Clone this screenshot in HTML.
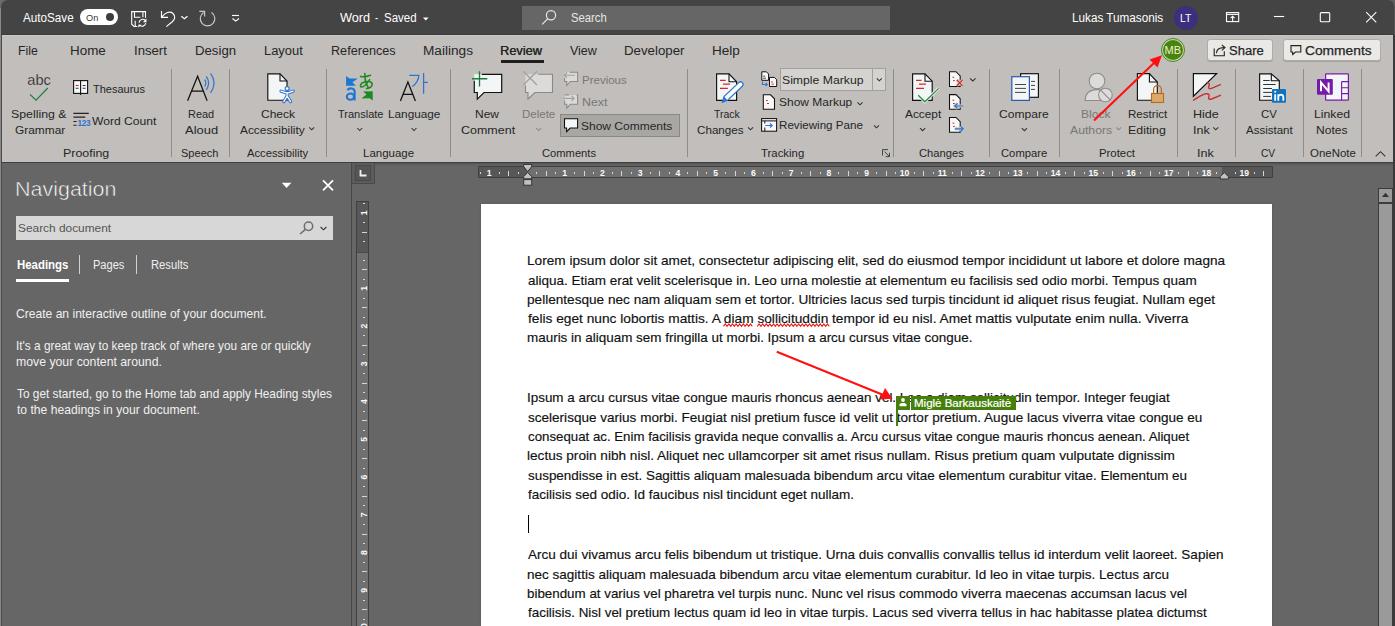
<!DOCTYPE html>
<html><head><meta charset="utf-8"><style>
html,body{margin:0;padding:0;width:1395px;height:626px;overflow:hidden;background:#666666}
body{position:relative;font-family:"Liberation Sans",sans-serif}
.b{position:absolute}
.t{position:absolute;white-space:nowrap;font-family:"Liberation Sans",sans-serif;transform-origin:0 0}
svg.ic{position:absolute;left:0;top:0;width:1395px;height:626px}
</style></head><body>

<!-- title bar -->
<div class="b" style="left:0;top:0;width:1395px;height:35px;background:#444444"></div>
<div class="b" style="left:0;top:34px;width:1395px;height:1px;background:#3b3b3b"></div>
<!-- search box -->
<div class="b" style="left:522px;top:6px;width:368px;height:24px;background:#666666"></div>
<!-- toggle -->
<div class="b" style="left:80px;top:9px;width:38px;height:16px;border-radius:8px;background:#ffffff"></div>
<div class="b" style="left:106px;top:13px;width:8px;height:8px;border-radius:4px;background:#3d3d3d"></div>
<!-- LT circle -->
<div class="b" style="left:1174px;top:6px;width:24px;height:24px;border-radius:12px;background:#3b2f7e"></div>
<!-- ribbon -->
<div class="b" style="left:0;top:35px;width:1393px;height:127px;background:#c1bebb"></div>
<div class="b" style="left:0;top:35px;width:1393px;height:1px;background:#c9c6c3"></div>
<!-- review underline -->
<div class="b" style="left:501px;top:60px;width:43px;height:3px;background:#1f1f1f"></div>
<!-- separators -->
<div class="b" style="left:171px;top:69px;width:1px;height:88px;background:#8f8d8a"></div>
<div class="b" style="left:229px;top:69px;width:1px;height:88px;background:#8f8d8a"></div>
<div class="b" style="left:326px;top:69px;width:1px;height:88px;background:#8f8d8a"></div>
<div class="b" style="left:450px;top:69px;width:1px;height:88px;background:#8f8d8a"></div>
<div class="b" style="left:687px;top:69px;width:1px;height:88px;background:#8f8d8a"></div>
<div class="b" style="left:893px;top:69px;width:1px;height:88px;background:#8f8d8a"></div>
<div class="b" style="left:989px;top:69px;width:1px;height:88px;background:#8f8d8a"></div>
<div class="b" style="left:1059px;top:69px;width:1px;height:88px;background:#8f8d8a"></div>
<div class="b" style="left:1177px;top:69px;width:1px;height:88px;background:#8f8d8a"></div>
<div class="b" style="left:1235px;top:69px;width:1px;height:88px;background:#8f8d8a"></div>
<div class="b" style="left:1303px;top:69px;width:1px;height:88px;background:#8f8d8a"></div>
<div class="b" style="left:1361px;top:69px;width:1px;height:88px;background:#8f8d8a"></div>
<!-- show comments toggled -->
<div class="b" style="left:560px;top:114px;width:118px;height:21px;background:#a9a7a4;border:1px solid #8a8886"></div>
<!-- simple markup dropdown -->
<div class="b" style="left:780px;top:68px;width:104px;height:21px;background:#d5d3d0;border:1px solid #a3a19f"></div>
<div class="b" style="left:872px;top:69px;width:1px;height:21px;background:#a3a19f"></div>
<!-- share/comments buttons -->
<div class="b" style="left:1207px;top:39px;width:64px;height:20px;background:#ebe9e6;border:1px solid #aeaca9;border-radius:3px;box-shadow:0 1px 0 #a5a3a0"></div>
<div class="b" style="left:1283px;top:39px;width:96px;height:20px;background:#ebe9e6;border:1px solid #aeaca9;border-radius:3px;box-shadow:0 1px 0 #a5a3a0"></div>
<!-- below ribbon -->
<div class="b" style="left:0;top:162px;width:1395px;height:1px;background:#3e3e3e"></div>
<div class="b" style="left:352px;top:163px;width:1041px;height:3px;background:linear-gradient(#555,#666)"></div>
<!-- nav pane divider -->
<div class="b" style="left:351px;top:163px;width:1px;height:463px;background:#474747"></div>
<!-- nav search box -->
<div class="b" style="left:16px;top:216px;width:317px;height:24px;background:#d7d7d7"></div>
<div class="b" style="left:16px;top:279px;width:53px;height:3px;background:#ffffff"></div>
<div class="b" style="left:79px;top:255px;width:1px;height:19px;background:#d0d0d0"></div>
<div class="b" style="left:136px;top:255px;width:1px;height:19px;background:#d0d0d0"></div>
<!-- tab selector -->
<div class="b" style="left:352px;top:163px;width:22px;height:20px;background:#5b5b5b;border-right:1px solid #4a4a4a;border-bottom:1px solid #4a4a4a"></div>
<div class="b" style="left:355px;top:165px;width:14px;height:14px;background:#555;border:1px solid #4a4a4a"></div>
<!-- horizontal ruler -->
<div class="b" style="left:478px;top:166px;width:795px;height:12px;background:#575757;box-sizing:border-box;border:1px solid #404040"></div>
<div class="b" style="left:527px;top:167px;width:695px;height:10px;background:#707070"></div>
<!-- vertical ruler -->
<div class="b" style="left:356px;top:201px;width:13px;height:425px;background:#575757;box-sizing:border-box;border:1px solid #404040;border-bottom:none"></div>
<div class="b" style="left:357px;top:253px;width:11px;height:373px;background:#707070"></div>
<div class="b" style="left:357px;top:252px;width:11px;height:1px;background:#4a4a4a"></div>
<!-- page -->
<div class="b" style="left:481px;top:204px;width:791px;height:422px;background:#ffffff;box-shadow:0 0 2px #555"></div>
<!-- scrollbar -->
<div class="b" style="left:1378px;top:188px;width:15px;height:15px;background:#9a9a9a;box-sizing:border-box;border:1px solid #3c3c3c"></div>
<div class="b" style="left:1378px;top:203px;width:15px;height:430px;background:#9a9a9a;box-sizing:border-box;border:1px solid #3c3c3c"></div>
<div class="b" style="left:1393px;top:35px;width:2px;height:591px;background:#3a3a3a"></div>
<!-- MB avatar -->
<div class="b" style="left:1161px;top:38px;width:24px;height:24px;border-radius:12px;box-sizing:border-box;border:1.3px solid #4a8a12;background:#c8d2bc"></div>
<div class="b" style="left:1163.3px;top:40.3px;width:19.4px;height:19.4px;border-radius:10px;background:#478410"></div>
<!-- window edges -->
<div class="b" style="left:0;top:0;width:1px;height:626px;background:#8a8a8a"></div>
<div class="b" style="left:1px;top:35px;width:1px;height:591px;background:#4a4a4a"></div>
<div class="b" style="left:0;top:0;width:8px;height:8px;background:#6a6a6a"></div>
<div class="b" style="left:1px;top:0;width:14px;height:14px;border-top-left-radius:7px;background:#444444"></div>
<div class="b" style="left:1387px;top:0;width:8px;height:8px;background:#5e5e5e"></div>
<div class="b" style="left:1380px;top:0;width:13.5px;height:14px;border-top-right-radius:6px;background:#444444"></div>
<div class="b" style="left:1393.5px;top:6px;width:1.5px;height:29px;background:#555"></div>

<div class='t' style='left:22.80px;top:12.00px;font-size:12.3px;line-height:12.3px;color:#ffffff;font-weight:normal;transform:scaleX(0.9509);'>AutoSave</div>
<div class='t' style='left:85.70px;top:13.00px;font-size:9.8px;line-height:9.8px;color:#3a3a3a;font-weight:normal;transform:scaleX(0.9385);'>On</div>
<div class='t' style='left:339.70px;top:12.00px;font-size:12.3px;line-height:12.3px;color:#ffffff;font-weight:normal;transform:scaleX(1.0357);'>Word</div>
<div class='t' style='left:374.70px;top:12.00px;font-size:12.3px;line-height:12.3px;color:#ffffff;font-weight:normal;transform:scaleX(0.7500);'>-</div>
<div class='t' style='left:383.87px;top:12.00px;font-size:12.3px;line-height:12.3px;color:#ffffff;font-weight:normal;transform:scaleX(0.9333);'>Saved</div>
<div class='t' style='left:571.08px;top:12.00px;font-size:12.3px;line-height:12.3px;color:#e6e6e6;font-weight:normal;transform:scaleX(0.9189);'>Search</div>
<div class='t' style='left:1072.25px;top:12.00px;font-size:12.3px;line-height:12.3px;color:#ffffff;font-weight:normal;transform:scaleX(0.9532);'>Lukas Tumasonis</div>
<div class='t' style='left:1179.65px;top:13.00px;font-size:11px;line-height:11px;color:#ffffff;font-weight:normal;transform:scaleX(0.9455);'>LT</div>
<div class='t' style='left:1164.50px;top:45.00px;font-size:11px;line-height:11px;color:#eef2c8;font-weight:normal;transform:scaleX(1.0000);'>MB</div>
<div class='t' style='left:18.31px;top:45.00px;font-size:12.3px;line-height:12.3px;color:#262626;font-weight:normal;transform:scaleX(0.9944);'>File</div>
<div class='t' style='left:70.41px;top:45.00px;font-size:12.3px;line-height:12.3px;color:#262626;font-weight:normal;transform:scaleX(1.0903);'>Home</div>
<div class='t' style='left:133.73px;top:45.00px;font-size:12.3px;line-height:12.3px;color:#262626;font-weight:normal;transform:scaleX(1.0700);'>Insert</div>
<div class='t' style='left:194.93px;top:45.00px;font-size:12.3px;line-height:12.3px;color:#262626;font-weight:normal;transform:scaleX(1.0730);'>Design</div>
<div class='t' style='left:263.95px;top:45.00px;font-size:12.3px;line-height:12.3px;color:#262626;font-weight:normal;transform:scaleX(1.0500);'>Layout</div>
<div class='t' style='left:330.97px;top:45.00px;font-size:12.3px;line-height:12.3px;color:#262626;font-weight:normal;transform:scaleX(1.0274);'>References</div>
<div class='t' style='left:422.89px;top:45.00px;font-size:12.3px;line-height:12.3px;color:#262626;font-weight:normal;transform:scaleX(1.1091);'>Mailings</div>
<div class='t' style='left:500.16px;top:45.00px;font-size:12.3px;line-height:12.3px;color:#262626;font-weight:normal;transform:scaleX(1.0375);text-shadow:0.3px 0 0 #262626;'>Review</div>
<div class='t' style='left:569.50px;top:45.00px;font-size:12.3px;line-height:12.3px;color:#262626;font-weight:normal;transform:scaleX(1.0148);'>View</div>
<div class='t' style='left:624.22px;top:45.00px;font-size:12.3px;line-height:12.3px;color:#262626;font-weight:normal;transform:scaleX(1.0782);'>Developer</div>
<div class='t' style='left:711.90px;top:45.00px;font-size:12.3px;line-height:12.3px;color:#262626;font-weight:normal;transform:scaleX(1.1000);'>Help</div>
<div class='t' style='left:11.26px;top:109.00px;font-size:11.8px;line-height:11.8px;color:#262626;font-weight:normal;transform:scaleX(1.0442);'>Spelling &amp;</div>
<div class='t' style='left:14.59px;top:125.00px;font-size:11.8px;line-height:11.8px;color:#262626;font-weight:normal;transform:scaleX(1.0082);'>Grammar</div>
<div class='t' style='left:93.40px;top:84.00px;font-size:11.8px;line-height:11.8px;color:#262626;font-weight:normal;transform:scaleX(0.9327);'>Thesaurus</div>
<div class='t' style='left:92.40px;top:116.00px;font-size:11.8px;line-height:11.8px;color:#262626;font-weight:normal;transform:scaleX(1.0254);'>Word Count</div>
<div class='t' style='left:187.57px;top:109.00px;font-size:11.8px;line-height:11.8px;color:#262626;font-weight:normal;transform:scaleX(0.9259);'>Read</div>
<div class='t' style='left:185.00px;top:125.00px;font-size:11.8px;line-height:11.8px;color:#262626;font-weight:normal;transform:scaleX(1.0966);'>Aloud</div>
<div class='t' style='left:261.38px;top:109.00px;font-size:11.8px;line-height:11.8px;color:#262626;font-weight:normal;transform:scaleX(1.0188);'>Check</div>
<div class='t' style='left:240.30px;top:125.00px;font-size:11.8px;line-height:11.8px;color:#262626;font-weight:normal;transform:scaleX(1.0078);'>Accessibility</div>
<div class='t' style='left:338.00px;top:109.00px;font-size:11.8px;line-height:11.8px;color:#262626;font-weight:normal;transform:scaleX(0.9333);'>Translate</div>
<div class='t' style='left:387.80px;top:109.00px;font-size:11.8px;line-height:11.8px;color:#262626;font-weight:normal;transform:scaleX(0.9980);'>Language</div>
<div class='t' style='left:475.49px;top:109.00px;font-size:11.8px;line-height:11.8px;color:#262626;font-weight:normal;transform:scaleX(1.0130);'>New</div>
<div class='t' style='left:460.54px;top:125.00px;font-size:11.8px;line-height:11.8px;color:#262626;font-weight:normal;transform:scaleX(1.0580);'>Comment</div>
<div class='t' style='left:521.62px;top:109.00px;font-size:11.8px;line-height:11.8px;color:#7a7876;font-weight:normal;transform:scaleX(0.9758);'>Delete</div>
<div class='t' style='left:581.62px;top:75.00px;font-size:11.8px;line-height:11.8px;color:#7a7876;font-weight:normal;transform:scaleX(0.9756);'>Previous</div>
<div class='t' style='left:581.55px;top:97.00px;font-size:11.8px;line-height:11.8px;color:#7a7876;font-weight:normal;transform:scaleX(1.0522);'>Next</div>
<div class='t' style='left:581.28px;top:121.00px;font-size:11.8px;line-height:11.8px;color:#262626;font-weight:normal;transform:scaleX(1.0169);'>Show Comments</div>
<div class='t' style='left:713.70px;top:109.00px;font-size:11.8px;line-height:11.8px;color:#262626;font-weight:normal;transform:scaleX(0.8897);'>Track</div>
<div class='t' style='left:697.41px;top:125.00px;font-size:11.8px;line-height:11.8px;color:#262626;font-weight:normal;transform:scaleX(0.9870);'>Changes</div>
<div class='t' style='left:781.76px;top:75.00px;font-size:11.8px;line-height:11.8px;color:#262626;font-weight:normal;transform:scaleX(1.0364);'>Simple Markup</div>
<div class='t' style='left:779.28px;top:97.00px;font-size:11.8px;line-height:11.8px;color:#262626;font-weight:normal;transform:scaleX(1.0155);'>Show Markup</div>
<div class='t' style='left:779.32px;top:120.00px;font-size:11.8px;line-height:11.8px;color:#262626;font-weight:normal;transform:scaleX(0.9845);'>Reviewing Pane</div>
<div class='t' style='left:904.50px;top:109.00px;font-size:11.8px;line-height:11.8px;color:#262626;font-weight:normal;transform:scaleX(1.0056);'>Accept</div>
<div class='t' style='left:999.47px;top:109.00px;font-size:11.8px;line-height:11.8px;color:#262626;font-weight:normal;transform:scaleX(1.0255);'>Compare</div>
<div class='t' style='left:1081.38px;top:109.00px;font-size:11.8px;line-height:11.8px;color:#7a7876;font-weight:normal;transform:scaleX(1.0214);'>Block</div>
<div class='t' style='left:1070.00px;top:125.00px;font-size:11.8px;line-height:11.8px;color:#7a7876;font-weight:normal;transform:scaleX(1.0375);'>Authors</div>
<div class='t' style='left:1127.72px;top:109.00px;font-size:11.8px;line-height:11.8px;color:#262626;font-weight:normal;transform:scaleX(0.9821);'>Restrict</div>
<div class='t' style='left:1128.25px;top:125.00px;font-size:11.8px;line-height:11.8px;color:#262626;font-weight:normal;transform:scaleX(1.0500);'>Editing</div>
<div class='t' style='left:1193.43px;top:109.00px;font-size:11.8px;line-height:11.8px;color:#262626;font-weight:normal;transform:scaleX(1.0652);'>Hide</div>
<div class='t' style='left:1192.63px;top:125.00px;font-size:11.8px;line-height:11.8px;color:#262626;font-weight:normal;transform:scaleX(1.0667);'>Ink</div>
<div class='t' style='left:1261.33px;top:109.00px;font-size:11.8px;line-height:11.8px;color:#262626;font-weight:normal;transform:scaleX(0.9667);'>CV</div>
<div class='t' style='left:1246.00px;top:125.00px;font-size:11.8px;line-height:11.8px;color:#262626;font-weight:normal;transform:scaleX(0.9750);'>Assistant</div>
<div class='t' style='left:1314.26px;top:109.00px;font-size:11.8px;line-height:11.8px;color:#262626;font-weight:normal;transform:scaleX(1.0364);'>Linked</div>
<div class='t' style='left:1316.28px;top:125.00px;font-size:11.8px;line-height:11.8px;color:#262626;font-weight:normal;transform:scaleX(1.0200);'>Notes</div>
<div class='t' style='left:63.40px;top:148.00px;font-size:11.3px;line-height:11.3px;color:#262626;font-weight:normal;transform:scaleX(1.1000);'>Proofing</div>
<div class='t' style='left:181.32px;top:148.00px;font-size:11.3px;line-height:11.3px;color:#262626;font-weight:normal;transform:scaleX(0.9784);'>Speech</div>
<div class='t' style='left:247.20px;top:148.00px;font-size:11.3px;line-height:11.3px;color:#262626;font-weight:normal;transform:scaleX(0.9934);'>Accessibility</div>
<div class='t' style='left:362.58px;top:148.00px;font-size:11.3px;line-height:11.3px;color:#262626;font-weight:normal;transform:scaleX(1.0163);'>Language</div>
<div class='t' style='left:541.81px;top:148.00px;font-size:11.3px;line-height:11.3px;color:#262626;font-weight:normal;transform:scaleX(0.9887);'>Comments</div>
<div class='t' style='left:761.40px;top:148.00px;font-size:11.3px;line-height:11.3px;color:#262626;font-weight:normal;transform:scaleX(1.0071);'>Tracking</div>
<div class='t' style='left:918.61px;top:148.00px;font-size:11.3px;line-height:11.3px;color:#262626;font-weight:normal;transform:scaleX(0.9909);'>Changes</div>
<div class='t' style='left:1000.50px;top:148.00px;font-size:11.3px;line-height:11.3px;color:#262626;font-weight:normal;transform:scaleX(0.9956);'>Compare</div>
<div class='t' style='left:1099.29px;top:148.00px;font-size:11.3px;line-height:11.3px;color:#262626;font-weight:normal;transform:scaleX(1.0057);'>Protect</div>
<div class='t' style='left:1197.09px;top:148.00px;font-size:11.3px;line-height:11.3px;color:#262626;font-weight:normal;transform:scaleX(1.1143);'>Ink</div>
<div class='t' style='left:1261.40px;top:148.00px;font-size:11.3px;line-height:11.3px;color:#262626;font-weight:normal;transform:scaleX(0.9000);'>CV</div>
<div class='t' style='left:1309.70px;top:148.00px;font-size:11.3px;line-height:11.3px;color:#262626;font-weight:normal;transform:scaleX(1.0133);'>OneNote</div>
<div class='t' style='left:1229.44px;top:45.00px;font-size:12.3px;line-height:12.3px;color:#262626;font-weight:normal;transform:scaleX(1.0581);-webkit-text-stroke:0.25px #262626;'>Share</div>
<div class='t' style='left:1305.18px;top:45.00px;font-size:12.3px;line-height:12.3px;color:#262626;font-weight:normal;transform:scaleX(1.1207);-webkit-text-stroke:0.25px #262626;'>Comments</div>
<div class='t' style='left:14.90px;top:179.00px;font-size:20.5px;line-height:20.5px;color:#ffffff;font-weight:normal;transform:scaleX(1.0479);-webkit-text-stroke:0.55px #666666;'>Navigation</div>
<div class='t' style='left:18.39px;top:223.00px;font-size:11.8px;line-height:11.8px;color:#555555;font-weight:normal;transform:scaleX(1.0065);'>Search document</div>
<div class='t' style='left:16.65px;top:259.00px;font-size:12px;line-height:12px;color:#ffffff;font-weight:bold;transform:scaleX(0.9509);'>Headings</div>
<div class='t' style='left:92.68px;top:259.00px;font-size:12px;line-height:12px;color:#f0f0f0;font-weight:normal;transform:scaleX(0.9212);'>Pages</div>
<div class='t' style='left:150.67px;top:259.00px;font-size:12px;line-height:12px;color:#f0f0f0;font-weight:normal;transform:scaleX(0.9333);'>Results</div>
<div class='t' style='left:15.91px;top:308.00px;font-size:12.2px;line-height:12.2px;color:#f0f0f0;font-weight:normal;transform:scaleX(0.9920);'>Create an interactive outline of your document.</div>
<div class='t' style='left:15.93px;top:340.00px;font-size:12.2px;line-height:12.2px;color:#f0f0f0;font-weight:normal;transform:scaleX(0.9703);'>It's a great way to keep track of where you are or quickly</div>
<div class='t' style='left:15.89px;top:356.00px;font-size:12.2px;line-height:12.2px;color:#f0f0f0;font-weight:normal;transform:scaleX(1.0063);'>move your content around.</div>
<div class='t' style='left:16.90px;top:388.00px;font-size:12.2px;line-height:12.2px;color:#f0f0f0;font-weight:normal;transform:scaleX(0.9725);'>To get started, go to the Home tab and apply Heading styles</div>
<div class='t' style='left:16.90px;top:404.00px;font-size:12.2px;line-height:12.2px;color:#f0f0f0;font-weight:normal;transform:scaleX(0.9956);'>to the headings in your document.</div>
<div class='t' style='left:527.20px;top:255.00px;font-size:12.4px;line-height:12.4px;color:#111111;font-weight:normal;transform:scaleX(1.0994);-webkit-text-stroke:0.15px #111;'>Lorem ipsum dolor sit amet, consectetur adipiscing elit, sed do eiusmod tempor incididunt ut labore et dolore magna</div>
<div class='t' style='left:528.30px;top:275.00px;font-size:12.4px;line-height:12.4px;color:#111111;font-weight:normal;transform:scaleX(1.0876);-webkit-text-stroke:0.15px #111;'>aliqua. Etiam erat velit scelerisque in. Leo urna molestie at elementum eu facilisis sed odio morbi. Tempus quam</div>
<div class='t' style='left:527.20px;top:294.00px;font-size:12.4px;line-height:12.4px;color:#111111;font-weight:normal;transform:scaleX(1.0978);-webkit-text-stroke:0.15px #111;'>pellentesque nec nam aliquam sem et tortor. Ultricies lacus sed turpis tincidunt id aliquet risus feugiat. Nullam eget</div>
<div class='t' style='left:528.30px;top:313.00px;font-size:12.4px;line-height:12.4px;color:#111111;font-weight:normal;transform:scaleX(1.1065);-webkit-text-stroke:0.15px #111;'>felis eget nunc lobortis mattis. A diam sollicituddin tempor id eu nisl. Amet mattis vulputate enim nulla. Viverra</div>
<div class='t' style='left:527.21px;top:332.00px;font-size:12.4px;line-height:12.4px;color:#111111;font-weight:normal;transform:scaleX(1.0851);-webkit-text-stroke:0.15px #111;'>mauris in aliquam sem fringilla ut morbi. Ipsum a arcu cursus vitae congue.</div>
<div class='t' style='left:527.22px;top:392.00px;font-size:12.4px;line-height:12.4px;color:#111111;font-weight:normal;transform:scaleX(1.0826);-webkit-text-stroke:0.15px #111;'>Ipsum a arcu cursus vitae congue mauris rhoncus aenean vel. Leo a diam sollicitudin tempor. Integer feugiat</div>
<div class='t' style='left:528.30px;top:412.00px;font-size:12.4px;line-height:12.4px;color:#111111;font-weight:normal;transform:scaleX(1.0929);-webkit-text-stroke:0.15px #111;'>scelerisque varius morbi. Feugiat nisl pretium fusce id velit ut tortor pretium. Augue lacus viverra vitae congue eu</div>
<div class='t' style='left:528.30px;top:431.00px;font-size:12.4px;line-height:12.4px;color:#111111;font-weight:normal;transform:scaleX(1.0702);-webkit-text-stroke:0.15px #111;'>consequat ac. Enim facilisis gravida neque convallis a. Arcu cursus vitae congue mauris rhoncus aenean. Aliquet</div>
<div class='t' style='left:527.20px;top:450.00px;font-size:12.4px;line-height:12.4px;color:#111111;font-weight:normal;transform:scaleX(1.0976);-webkit-text-stroke:0.15px #111;'>lectus proin nibh nisl. Aliquet nec ullamcorper sit amet risus nullam. Risus pretium quam vulputate dignissim</div>
<div class='t' style='left:528.30px;top:470.00px;font-size:12.4px;line-height:12.4px;color:#111111;font-weight:normal;transform:scaleX(1.0836);-webkit-text-stroke:0.15px #111;'>suspendisse in est. Sagittis aliquam malesuada bibendum arcu vitae elementum curabitur vitae. Elementum eu</div>
<div class='t' style='left:528.30px;top:489.00px;font-size:12.4px;line-height:12.4px;color:#111111;font-weight:normal;transform:scaleX(1.0883);-webkit-text-stroke:0.15px #111;'>facilisis sed odio. Id faucibus nisl tincidunt eget nullam.</div>
<div class='t' style='left:528.30px;top:549.00px;font-size:12.4px;line-height:12.4px;color:#111111;font-weight:normal;transform:scaleX(1.0917);-webkit-text-stroke:0.15px #111;'>Arcu dui vivamus arcu felis bibendum ut tristique. Urna duis convallis convallis tellus id interdum velit laoreet. Sapien</div>
<div class='t' style='left:527.21px;top:569.00px;font-size:12.4px;line-height:12.4px;color:#111111;font-weight:normal;transform:scaleX(1.0915);-webkit-text-stroke:0.15px #111;'>nec sagittis aliquam malesuada bibendum arcu vitae elementum curabitur. Id leo in vitae turpis. Lectus arcu</div>
<div class='t' style='left:527.22px;top:588.00px;font-size:12.4px;line-height:12.4px;color:#111111;font-weight:normal;transform:scaleX(1.0781);-webkit-text-stroke:0.15px #111;'>bibendum at varius vel pharetra vel turpis nunc. Nunc vel risus commodo viverra maecenas accumsan lacus vel</div>
<div class='t' style='left:528.30px;top:607.00px;font-size:12.4px;line-height:12.4px;color:#111111;font-weight:normal;transform:scaleX(1.0817);-webkit-text-stroke:0.15px #111;'>facilisis. Nisl vel pretium lectus quam id leo in vitae turpis. Lacus sed viverra tellus in hac habitasse platea dictumst</div>
<!-- comment flag -->
<div class="b" style="left:896px;top:396px;width:14px;height:14px;background:#467f0c"></div>
<div class="b" style="left:911px;top:396px;width:105px;height:14px;background:#467f0c"></div>
<div class="b" style="left:896px;top:396px;width:2px;height:30px;background:#467f0c"></div>
<!-- cursor -->
<div class="b" style="left:528px;top:515px;width:1px;height:18px;background:#000"></div>

<div class='t' style='left:914.37px;top:399.00px;font-size:10.2px;line-height:10.2px;color:#ffffff;font-weight:normal;transform:scaleX(1.1294);-webkit-text-stroke:0.2px #fff;'>Miglė Barkauskaitė</div>
<svg class="ic" viewBox="0 0 1395 626">
<!-- ===== title bar ===== -->
<g fill="none" stroke="#ffffff" stroke-width="1.1" stroke-linecap="square">
 <path d="M145.5,17.2 V11.6 H131.7 V24.2 L134,26.5 H136.8"/>
 <path d="M134.5,12 V17.3 H139.8"/>
 <path d="M142.9,12 V16.6"/>
 <path d="M135.2,21.2 V26"/>
 <path d="M139.2,22 A3.6,3.6 0 0 1 145.2,20.3"/>
 <path d="M145.6,23.6 A3.6,3.6 0 0 1 139.6,25.2"/>
</g>
<path d="M146.5,18.5 L146.5,22.3 L142.8,22.3 Z" fill="#fff"/>
<path d="M138.3,24.8 L138.3,27.5 L141.5,24.8 Z" fill="#fff"/>
<g fill="none" stroke="#ffffff" stroke-width="1.15">
 <path d="M161.5,11 V17.4 H168"/>
 <path d="M162,16.9 C165,12.6 170,10.8 173,13.5 C176,16.5 174.8,19.6 172.3,21.8 L166.3,26.6"/>
 <path d="M181.3,16.2 L184.4,18.8 L187.5,16.2"/>
 <path d="M232,15.5 H239"/>
 <path d="M232.5,18.5 L235.7,21.1 L239,18.5"/>
</g>
<g fill="none" stroke="#c9c9c9" stroke-width="1.15">
 <path d="M199.3,11.4 H204.6 V16.5"/>
 <path d="M203.6,12.4 A7.3,7.3 0 1 0 211.5,12.4"/>
</g>
<path d="M423,17.6 H428.6 L425.8,20.6 Z" fill="#fff"/>
<g fill="none" stroke="#e8e8e8" stroke-width="1.2">
 <circle cx="551" cy="15.3" r="4.6"/>
 <path d="M547.8,18.6 L542.2,24.3"/>
</g>
<g fill="none" stroke="#ffffff" stroke-width="1.1">
 <rect x="1226.5" y="12.6" width="12.2" height="9"/>
 <path d="M1226.5,14.4 H1238.7"/>
 <path d="M1232.6,21.6 V16.2 M1230.6,18.2 L1232.6,16.2 L1234.6,18.2"/>
 <path d="M1273.9,16.5 H1284.2"/>
 <rect x="1320.3" y="12.6" width="9.4" height="9.2" rx="1"/>
 <path d="M1366.2,12.2 L1376.3,22.3 M1376.3,12.2 L1366.2,22.3"/>
</g>

<!-- ===== ribbon icons ===== -->
<!-- Spelling -->
<text x="27.3" y="84.6" font-family="Liberation Sans" font-size="14.6" fill="#222" stroke="#c1bebb" stroke-width="0.25">abc</text>
<path d="M30,94.4 L36,100.2 L47.8,88" fill="none" stroke="#228040" stroke-width="1.3"/>
<!-- Thesaurus -->
<g stroke="#111" stroke-width="1.1" fill="#f8f8f8">
 <rect x="73.6" y="80.6" width="14" height="12.8"/>
</g>
<path d="M80.6,80.6 V95" stroke="#111" stroke-width="1.1"/>
<path d="M75.7,85.5 H78.6" stroke="#d42020" stroke-width="1.1"/>
<path d="M75.7,88.3 H78.6 M82.7,85.5 H85.6 M82.7,88.3 H85.6" stroke="#333" stroke-width="1.1"/>
<!-- Word count -->
<path d="M73.4,113.4 H88.8 M73.4,117.1 H85.2 M73.4,121.5 H76.6 M73.4,125.3 H76.6" stroke="#222" stroke-width="1.1"/>
<text x="77.6" y="125.9" font-family="Liberation Sans" font-size="8.2" font-weight="bold" fill="#2f74d0" letter-spacing="-0.3">123</text>
<!-- Read aloud -->
<path d="M187.6,100.7 L197.6,76.2 L207.1,100.7 M191.6,91.2 H203.4" fill="none" stroke="#111" stroke-width="1.25"/>
<g fill="none" stroke="#2f74d0" stroke-width="1.2">
 <path d="M204.7,79.6 Q206.9,83 204.7,86.5"/>
 <path d="M206.3,76.4 Q211,83 206.3,89.8"/>
 <path d="M210.6,73.4 Q217.5,83 210.6,92.8"/>
</g>
<!-- Check accessibility -->
<path d="M267.8,73.8 H280 L287,81 V100.2 H267.8 Z" fill="#f3f6f6" stroke="#111" stroke-width="1.15"/>
<path d="M280,73.8 V81 H287" fill="none" stroke="#111" stroke-width="1.1"/>
<g stroke="#2f74d0" stroke-width="3.2" stroke-linecap="round" fill="none">
 <path d="M281,91.2 L287.1,93 L293.2,91.2 M287.1,92.5 V96 L283.8,101.6 M287.1,96 L290.6,101.6"/>
</g>
<g stroke="#ffffff" stroke-width="1.2" stroke-linecap="round" fill="none">
 <path d="M281,91.2 L287.1,93 L293.2,91.2 M287.1,92.5 V96 L283.8,101.6 M287.1,96 L290.6,101.6"/>
</g>
<circle cx="287.1" cy="88.6" r="2" fill="#fff" stroke="#2f74d0" stroke-width="1.1"/>
<!-- Translate -->
<path d="M346.1,76.1 L349.6,78.6 L357.8,78.4 L352.5,82.2 L355.8,85.8 L346.1,85.8 Z" fill="#1a78d4"/>
<path d="M347.3,90 C349.5,87.6 354.6,87.8 354.6,91.5 V100.6" fill="none" stroke="#1a78d4" stroke-width="2.1"/>
<ellipse cx="350.4" cy="96.7" rx="3.6" ry="3.1" fill="none" stroke="#1a78d4" stroke-width="2"/>
<g fill="none" stroke="#1e8a1e" stroke-width="1.55" stroke-linecap="round">
 <path d="M360.5,76.4 C363,77 367,76.5 370.5,75.2"/>
 <path d="M364.8,73.6 C364.8,78 365.5,83.5 368.3,87.6"/>
 <path d="M369.6,79.6 C367,83.5 364,87.3 361.6,87 C359.5,86.8 360.3,83.6 363.6,82.3 C367.5,80.8 372.2,81.3 372.2,84.2 C372.2,86.7 369.7,88 366.6,88.6"/>
</g>
<path d="M372.7,91.2 L372.7,100.6 L369.6,98.3 L361.4,98.6 L366.5,94.5 L363.2,91.4 Z" fill="#1e8a1e"/>
<!-- Language -->
<path d="M400.4,101 L407.9,82 L415.4,101 M403.2,94.4 H412.6" fill="none" stroke="#111" stroke-width="1.25"/>
<path d="M409.2,75.3 H418.9 C418.6,80 416,84 412.4,86.6 M423.6,73 V93.8 M423.6,82.3 H427.9" fill="none" stroke="#2f74d0" stroke-width="1.25"/>
<!-- chevrons under large buttons -->
<g fill="none" stroke="#333" stroke-width="1.05">
 <path d="M357.2,128 L359.7,130.5 L362.2,128"/>
 <path d="M411.5,128 L414,130.5 L416.5,128"/>
 <path d="M536.2,128 L538.7,130.5 L541.2,128" stroke="#8a8886"/>
 <path d="M920,128.2 L922.6,130.7 L925.2,128.2"/>
 <path d="M1021.8,128.2 L1024.4,130.7 L1027,128.2"/>
 <path d="M309.2,127.3 L311.7,129.8 L314.2,127.3"/>
 <path d="M748,127.3 L750.5,129.8 L753,127.3"/>
 <path d="M1116.2,127.3 L1118.7,129.8 L1121.2,127.3" stroke="#8a8886"/>
 <path d="M1213.3,127.3 L1215.8,129.8 L1218.3,127.3"/>
 <path d="M857.5,102.3 L860,104.8 L862.5,102.3"/>
 <path d="M874,125.3 L876.5,127.8 L879,125.3"/>
 <path d="M876.8,78.3 L879.3,80.8 L881.8,78.3"/>
 <path d="M970,78.4 L972.8,81 L975.6,78.4"/>
 <path d="M1375.7,156.3 L1380.5,151.7 L1385.3,156.3" stroke-width="1.1"/>
</g>
<!-- New comment -->
<path d="M474.3,74.3 H501.7 V92.5 H484 L477.3,99.1 V92.5 H474.3 Z" fill="#f3f6f6"/>
<path d="M481.8,74.3 H501.7 V92.5 H484 L477.3,99.1 V92.5 H474.3 V80.8" fill="none" stroke="#111" stroke-width="1.2"/>
<path d="M472,78.7 H487.3 M479.5,71.2 V86.5" stroke="#1e7b3a" stroke-width="1.35"/>
<!-- Delete -->
<path d="M525.5,74.3 H552.5 V92.5 H535 L528,99 V92.5 H525.5 Z" fill="#dddbd9"/>
<path d="M538.2,74.3 H552.5 V92.5 H535 L528,99 V92.5 H525.5 V85.5" fill="none" stroke="#8a8886" stroke-width="1.1"/>
<path d="M523.3,71.2 L537,85 M537,71.2 L523.3,85" stroke="#a3a19f" stroke-width="1.3"/>
<!-- Previous / Next -->
<path d="M564.6,72.2 H577.6 V81.4 H570.3 L566.8,85.3 V81.4 H564.6 Z" fill="#dcdad8"/>
<path d="M569.8,72.2 H577.6 V81.4 H570.3 L566.8,85.3 V81.4 H564.6 V78" fill="none" stroke="#8a8886" stroke-width="1.05"/>
<path d="M564.6,95 H577.6 V104.2 H570.3 L566.8,108.1 V104.2 H564.6 Z" fill="#dcdad8"/>
<path d="M576.5,95 H577.6 V104.2 H570.3 L566.8,108.1 V104.2 H564.6 V100.5 M564.6,95 H569" fill="none" stroke="#8a8886" stroke-width="1.05"/>
<g stroke="#a3a19f" stroke-width="1.15" fill="none">
 <path d="M575,75.2 H564.3 M567,72.5 L564.3,75.2 L567,77.9"/>
 <path d="M563.5,98.4 H574.2 M571.5,95.7 L574.2,98.4 L571.5,101.1"/>
</g>
<!-- Show comments icon -->
<path d="M564.5,118.7 H577.6 V128 H570.2 L566.6,131.6 V128 H564.5 Z" fill="#f3f6f6" stroke="#111" stroke-width="1.1"/>
<!-- Track changes -->
<path d="M716.6,73.8 H729 L736.6,81.8 V100.3 H716.6 Z" fill="#f3f6f6" stroke="#111" stroke-width="1.15"/>
<path d="M729,73.8 V81.8 H736.6" fill="none" stroke="#111" stroke-width="1.1"/>
<path d="M720,80.3 H725.7 M722.9,84.1 H730.1 M720,88.4 H727.9" stroke="#d42a2a" stroke-width="1.2"/>
<path d="M722.5,102.2 L724,96.5 L738.8,82.6 A2,2 0 0 1 742.3,86.2 L727.6,100.3 Z" fill="#ffffff" stroke="#2f74d0" stroke-width="1.2"/>
<path d="M722.5,102.2 L724,96.5 L727.6,100.3 Z" fill="#2f74d0"/>
<!-- Display for review -->
<path d="M761.8,71.8 H766.4 L768.6,74 V80.3 H761.8 Z" fill="#f8f8f8" stroke="#111" stroke-width="1"/>
<path d="M763.2,76.2 H765.2 M763.2,78.2 H766" stroke="#333" stroke-width="0.9"/>
<path d="M769.5,77.4 H774.4 L776.7,79.7 V86.5 H769.5 Z" fill="#f8f8f8" stroke="#111" stroke-width="1"/>
<path d="M771,82 H773 M771.5,84.2 H774" stroke="#d42a2a" stroke-width="0.9"/>
<path d="M762.4,81.5 V84.5 H767 M765.6,83 L767.3,84.5 L765.6,86" fill="none" stroke="#2f74d0" stroke-width="1.1"/>
<!-- Show markup -->
<path d="M763.3,94.8 H770.5 L774.5,98.8 V109.3 H763.3 Z" fill="#f8f8f8" stroke="#111" stroke-width="1.05"/>
<path d="M766,100.5 H767.8 M767,103.5 H769" stroke="#d42a2a" stroke-width="1"/>
<!-- Reviewing pane -->
<rect x="761.6" y="118.6" width="15" height="12.6" fill="#f8f8f8" stroke="#111" stroke-width="1.05"/>
<path d="M761.6,120.9 H776.6 M764.8,120.9 V123.5 M764.8,127.5 V131.2" stroke="#111" stroke-width="1"/>
<path d="M765.2,125.5 H772 M770,123.5 L772.2,125.5 L770,127.5" fill="none" stroke="#2f74d0" stroke-width="1.1"/>
<!-- Dialog launcher -->
<path d="M882.5,149.6 H888 M882.5,149.6 V155.6 M884.5,151.6 L889.5,156.6 M889.5,152.8 V156.6 H885.7" fill="none" stroke="#444" stroke-width="1"/>
<!-- Accept -->
<path d="M912.6,73.8 H925 L932.2,81.2 V100.3 H912.6 Z" fill="#f3f6f6" stroke="#111" stroke-width="1.15"/>
<path d="M925,73.8 V81.2 H932.2" fill="none" stroke="#111" stroke-width="1.1"/>
<path d="M916,80.3 H921.6 M919,84.1 H926 M916,88.4 H924" stroke="#d42a2a" stroke-width="1.2"/>
<path d="M917.8,95 L924.9,101.6 L938.6,88.2" fill="none" stroke="#f3f6f6" stroke-width="3"/>
<path d="M918.2,95.3 L924.9,101.8 L938.6,88.4" fill="none" stroke="#2a8a3e" stroke-width="1.3"/>
<!-- Reject / prev / next change -->
<g stroke="#111" stroke-width="1.05" fill="#f8f8f8">
 <path d="M949.5,71.7 H956 L960.2,75.9 V86.4 H949.5 Z"/>
 <path d="M949.5,94.6 H956 L960.2,98.8 V109.3 H949.5 Z"/>
 <path d="M949.5,117.5 H956 L960.2,121.7 V132.2 H949.5 Z"/>
</g>
<path d="M952.5,77.3 H954.3 M953,80.6 H954.8 M952.5,100.2 H954.3 M953,103.5 H954.8 M952.5,123.1 H954.3 M953,126.4 H954.8" stroke="#d42a2a" stroke-width="1"/>
<path d="M956.8,79.8 L962.6,85.8 M962.6,79.8 L956.8,85.8" stroke="#c8c5c2" stroke-width="3"/>
<path d="M956.8,79.8 L962.6,85.8 M962.6,79.8 L956.8,85.8" stroke="#d42a2a" stroke-width="1.2"/>
<path d="M963.3,106 H954.8 M957.5,103.3 L954.8,106 L957.5,108.7" fill="none" stroke="#c8c5c2" stroke-width="3"/>
<path d="M963.3,106 H954.8 M957.5,103.3 L954.8,106 L957.5,108.7" fill="none" stroke="#2f74d0" stroke-width="1.2"/>
<path d="M954.8,128.8 H963.3 M960.6,126.1 L963.3,128.8 L960.6,131.5" fill="none" stroke="#c8c5c2" stroke-width="3"/>
<path d="M954.8,128.8 H963.3 M960.6,126.1 L963.3,128.8 L960.6,131.5" fill="none" stroke="#2f74d0" stroke-width="1.2"/>
<!-- Compare -->
<rect x="1020.6" y="73.7" width="17.8" height="23.6" fill="#f3f6f6" stroke="#111" stroke-width="1.15"/>
<path d="M1031,81.4 H1035 M1031,85.4 H1035 M1031,89.4 H1035" stroke="#444" stroke-width="1"/>
<rect x="1011.8" y="76.7" width="17.6" height="23.7" fill="#f3f6f6" stroke="#2b57b0" stroke-width="1.2"/>
<path d="M1015,84.5 H1026 M1015,88.4 H1026 M1015,92.4 H1026" stroke="#444" stroke-width="1"/>
<!-- Block authors -->
<g stroke="#8d8b89" stroke-width="1.05" fill="#dddbd9">
 <path d="M1085.2,100.4 C1085.5,93 1090,89.6 1097.2,89.6 C1101,89.6 1103,90.5 1104.5,91.5 L1104.5,100.4 Z"/>
 <circle cx="1097" cy="81" r="7.8"/>
 <circle cx="1105.4" cy="95" r="6.8"/>
 <path d="M1100.6,90.2 L1110.2,99.8"/>
</g>
<!-- Restrict editing -->
<path d="M1137.4,73.6 H1149.4 L1157.3,82 V100.2 H1137.4 Z" fill="#f3f6f6" stroke="#111" stroke-width="1.15"/>
<path d="M1149.4,73.6 V82 H1157.3" fill="none" stroke="#111" stroke-width="1.1"/>
<path d="M1153.6,93.5 V89.5 A3.9,3.9 0 0 1 1161.4,89.5 V93.5" fill="none" stroke="#b56a20" stroke-width="1.2"/>
<rect x="1151.5" y="93.5" width="12" height="9" fill="#dea866" stroke="#b56a20" stroke-width="1.1"/>
<!-- Hide ink -->
<path d="M1193.4,73.6 H1216.6 L1193.4,96.3 Z" fill="#f3f6f6" stroke="#111" stroke-width="1.2"/>
<path d="M1207,82.8 C1209.5,83 1209.8,84.5 1208.8,86.5 C1208,88.5 1209.5,89.2 1211.5,88.3 L1220.4,84.6" fill="none" stroke="#c83232" stroke-width="1.45" stroke-linecap="round"/>
<path d="M1193.6,100.2 C1198,97.5 1202.5,94 1206,93.7 C1209.5,93.4 1209.5,95.5 1208.8,97.3 C1208.2,99.2 1209.5,99.8 1211.5,99 L1220.4,95.3" fill="none" stroke="#c83232" stroke-width="1.45" stroke-linecap="round"/>
<!-- CV -->
<path d="M1259.6,73.8 H1271.3 L1279.3,80.8 V100.2 H1259.6 Z" fill="#f3f6f6" stroke="#111" stroke-width="1.15"/>
<path d="M1271.3,73.8 V80.8 H1279.3" fill="none" stroke="#111" stroke-width="1.1"/>
<path d="M1263.2,80.5 H1269.7 M1263.2,84.5 H1275.6 M1263.2,88.5 H1272 M1263.2,92.4 H1272 M1263.2,96.4 H1271" stroke="#333" stroke-width="1"/>
<rect x="1272" y="89.1" width="14" height="13.6" rx="1" fill="#1173c0"/>
<path d="M1275.2,94.3 V100.8 M1278.3,100.8 V94.3 M1278.3,96.5 C1279,94.5 1283.3,93.7 1283.3,97 V100.8" fill="none" stroke="#fff" stroke-width="1.8"/>
<circle cx="1275.2" cy="91.7" r="1.05" fill="#fff"/>
<!-- OneNote -->
<rect x="1325.6" y="73.8" width="22.8" height="26.4" rx="0.8" fill="#f3f6f6" stroke="#7719aa" stroke-width="1.2"/>
<path d="M1341.6,81.6 V100.2 M1341.6,81.6 H1348.4 M1341.6,87.7 H1348.4 M1341.6,93.6 H1348.4" stroke="#7719aa" stroke-width="1.1" fill="none"/>
<rect x="1317" y="79" width="15.8" height="15.7" rx="1" fill="#7719aa"/>
<path d="M1321,91.3 V82.5 L1328.6,91.3 V82.5" fill="none" stroke="#fff" stroke-width="2"/>
<!-- Share & comments icons -->
<path d="M1214.2,48.4 V55.8 H1224.3 V51.2" fill="none" stroke="#222" stroke-width="1.1"/>
<path d="M1216.4,53.3 C1216.6,49.5 1219.5,47.5 1224.3,47.6" fill="none" stroke="#222" stroke-width="1.1"/>
<path d="M1221.8,44.8 L1225,47.6 L1221.8,50.4" fill="none" stroke="#222" stroke-width="1.1"/>
<path d="M1291,45.6 H1300.8 V52 H1295.5 L1292.7,54.5 V52 H1291 Z" fill="none" stroke="#222" stroke-width="1.1"/>

<!-- ===== nav pane ===== -->
<path d="M281.8,182.8 H291.4 L286.6,188 Z" fill="#fff"/>
<path d="M323,180.3 L333,190.3 M333,180.3 L323,190.3" stroke="#fff" stroke-width="1.8"/>
<circle cx="308.5" cy="226.2" r="4.2" fill="none" stroke="#6e6e6e" stroke-width="1.5"/>
<path d="M305.4,229.3 L300,234" stroke="#6e6e6e" stroke-width="1.6"/>
<path d="M320.6,227 L323.5,229.8 L326.4,227" fill="none" stroke="#333" stroke-width="1.1"/>
<!-- tab selector L -->
<path d="M360.5,170 V175.5 H366.5" fill="none" stroke="#f2f2f2" stroke-width="1.8"/>

<!-- ===== comment flag icon + text cursor ===== -->
<circle cx="903" cy="400" r="1.9" fill="#fff"/>
<path d="M899.5,404.5 C899.5,402.5 906.5,402.5 906.5,404.5 V406.3 H899.5 Z" fill="#fff"/>

<polyline points="723.5,326.4 725.3,324.0 727.1,326.4 728.9,324.0 730.7,326.4 732.5,324.0 734.3,326.4 736.1,324.0 737.9,326.4 739.7,324.0 741.5,326.4 743.3,324.0 745.1,326.4 746.9,324.0 748.7,326.4 750.5,324.0 752.3,326.4" fill="none" stroke="#f01818" stroke-width="1.1"/>
<polyline points="757.3,326.4 759.1,324.0 760.9,326.4 762.7,324.0 764.5,326.4 766.3,324.0 768.1,326.4 769.9,324.0 771.7,326.4 773.5,324.0 775.3,326.4 777.1,324.0 778.9,326.4 780.7,324.0 782.5,326.4 784.3,324.0 786.1,326.4 787.9,324.0 789.7,326.4 791.5,324.0 793.3,326.4 795.1,324.0 796.9,326.4 798.7,324.0 800.5,326.4 802.3,324.0 804.1,326.4 805.9,324.0 807.7,326.4 809.5,324.0 811.3,326.4 813.1,324.0 814.9,326.4 816.7,324.0 818.5,326.4 820.3,324.0 822.1,326.4 823.9,324.0 825.7,326.4 827.5,324.0 829.3,326.4" fill="none" stroke="#f01818" stroke-width="1.1"/>
<!-- red arrows -->
<g stroke="#ff1010" stroke-width="2" fill="#ff1010">
<line x1="776.8" y1="351.7" x2="884" y2="395.2"/>
<path d="M892.5,398.7 L880,399.5 L885,388 Z" stroke="none"/>
<line x1="1094" y1="120.5" x2="1155" y2="62"/>
<path d="M1162,55.3 L1157.5,67.5 L1149.5,59.5 Z" stroke="none"/>
</g>
<path d="M1382,197 H1389 L1385.5,192.8 Z" fill="#333"/>
<rect x="480" y="172" width="1" height="2" fill="#d6d6d6"/>
<rect x="499" y="172" width="1" height="2" fill="#d6d6d6"/>
<rect x="508" y="171" width="1" height="5" fill="#d6d6d6"/>
<rect x="518" y="172" width="1" height="2" fill="#d6d6d6"/>
<rect x="536" y="172" width="1" height="2" fill="#d6d6d6"/>
<rect x="546" y="171" width="1" height="5" fill="#d6d6d6"/>
<rect x="555" y="172" width="1" height="2" fill="#d6d6d6"/>
<rect x="574" y="172" width="1" height="2" fill="#d6d6d6"/>
<rect x="584" y="171" width="1" height="5" fill="#d6d6d6"/>
<rect x="593" y="172" width="1" height="2" fill="#d6d6d6"/>
<rect x="612" y="172" width="1" height="2" fill="#d6d6d6"/>
<rect x="621" y="171" width="1" height="5" fill="#d6d6d6"/>
<rect x="631" y="172" width="1" height="2" fill="#d6d6d6"/>
<rect x="650" y="172" width="1" height="2" fill="#d6d6d6"/>
<rect x="659" y="171" width="1" height="5" fill="#d6d6d6"/>
<rect x="669" y="172" width="1" height="2" fill="#d6d6d6"/>
<rect x="687" y="172" width="1" height="2" fill="#d6d6d6"/>
<rect x="697" y="171" width="1" height="5" fill="#d6d6d6"/>
<rect x="706" y="172" width="1" height="2" fill="#d6d6d6"/>
<rect x="725" y="172" width="1" height="2" fill="#d6d6d6"/>
<rect x="735" y="171" width="1" height="5" fill="#d6d6d6"/>
<rect x="744" y="172" width="1" height="2" fill="#d6d6d6"/>
<rect x="763" y="172" width="1" height="2" fill="#d6d6d6"/>
<rect x="772" y="171" width="1" height="5" fill="#d6d6d6"/>
<rect x="782" y="172" width="1" height="2" fill="#d6d6d6"/>
<rect x="801" y="172" width="1" height="2" fill="#d6d6d6"/>
<rect x="810" y="171" width="1" height="5" fill="#d6d6d6"/>
<rect x="820" y="172" width="1" height="2" fill="#d6d6d6"/>
<rect x="838" y="172" width="1" height="2" fill="#d6d6d6"/>
<rect x="848" y="171" width="1" height="5" fill="#d6d6d6"/>
<rect x="857" y="172" width="1" height="2" fill="#d6d6d6"/>
<rect x="876" y="172" width="1" height="2" fill="#d6d6d6"/>
<rect x="886" y="171" width="1" height="5" fill="#d6d6d6"/>
<rect x="895" y="172" width="1" height="2" fill="#d6d6d6"/>
<rect x="914" y="172" width="1" height="2" fill="#d6d6d6"/>
<rect x="923" y="171" width="1" height="5" fill="#d6d6d6"/>
<rect x="933" y="172" width="1" height="2" fill="#d6d6d6"/>
<rect x="952" y="172" width="1" height="2" fill="#d6d6d6"/>
<rect x="961" y="171" width="1" height="5" fill="#d6d6d6"/>
<rect x="971" y="172" width="1" height="2" fill="#d6d6d6"/>
<rect x="989" y="172" width="1" height="2" fill="#d6d6d6"/>
<rect x="999" y="171" width="1" height="5" fill="#d6d6d6"/>
<rect x="1008" y="172" width="1" height="2" fill="#d6d6d6"/>
<rect x="1027" y="172" width="1" height="2" fill="#d6d6d6"/>
<rect x="1037" y="171" width="1" height="5" fill="#d6d6d6"/>
<rect x="1046" y="172" width="1" height="2" fill="#d6d6d6"/>
<rect x="1065" y="172" width="1" height="2" fill="#d6d6d6"/>
<rect x="1074" y="171" width="1" height="5" fill="#d6d6d6"/>
<rect x="1084" y="172" width="1" height="2" fill="#d6d6d6"/>
<rect x="1103" y="172" width="1" height="2" fill="#d6d6d6"/>
<rect x="1112" y="171" width="1" height="5" fill="#d6d6d6"/>
<rect x="1122" y="172" width="1" height="2" fill="#d6d6d6"/>
<rect x="1140" y="172" width="1" height="2" fill="#d6d6d6"/>
<rect x="1150" y="171" width="1" height="5" fill="#d6d6d6"/>
<rect x="1159" y="172" width="1" height="2" fill="#d6d6d6"/>
<rect x="1178" y="172" width="1" height="2" fill="#d6d6d6"/>
<rect x="1188" y="171" width="1" height="5" fill="#d6d6d6"/>
<rect x="1197" y="172" width="1" height="2" fill="#d6d6d6"/>
<rect x="1216" y="172" width="1" height="2" fill="#d6d6d6"/>
<rect x="1235" y="172" width="1" height="2" fill="#d6d6d6"/>
<rect x="1254" y="172" width="1" height="2" fill="#d6d6d6"/>
<rect x="1263" y="171" width="1" height="5" fill="#d6d6d6"/>
<text transform="translate(489.25,176) scale(0.9,1)" font-family="Liberation Sans" font-size="9.6" font-weight="bold" fill="#fafafa" text-anchor="middle">1</text>
<text transform="translate(564.75,176) scale(0.9,1)" font-family="Liberation Sans" font-size="9.6" font-weight="bold" fill="#fafafa" text-anchor="middle">1</text>
<text transform="translate(602.50,176) scale(0.9,1)" font-family="Liberation Sans" font-size="9.6" font-weight="bold" fill="#fafafa" text-anchor="middle">2</text>
<text transform="translate(640.25,176) scale(0.9,1)" font-family="Liberation Sans" font-size="9.6" font-weight="bold" fill="#fafafa" text-anchor="middle">3</text>
<text transform="translate(678.00,176) scale(0.9,1)" font-family="Liberation Sans" font-size="9.6" font-weight="bold" fill="#fafafa" text-anchor="middle">4</text>
<text transform="translate(715.75,176) scale(0.9,1)" font-family="Liberation Sans" font-size="9.6" font-weight="bold" fill="#fafafa" text-anchor="middle">5</text>
<text transform="translate(753.50,176) scale(0.9,1)" font-family="Liberation Sans" font-size="9.6" font-weight="bold" fill="#fafafa" text-anchor="middle">6</text>
<text transform="translate(791.25,176) scale(0.9,1)" font-family="Liberation Sans" font-size="9.6" font-weight="bold" fill="#fafafa" text-anchor="middle">7</text>
<text transform="translate(829.00,176) scale(0.9,1)" font-family="Liberation Sans" font-size="9.6" font-weight="bold" fill="#fafafa" text-anchor="middle">8</text>
<text transform="translate(866.75,176) scale(0.9,1)" font-family="Liberation Sans" font-size="9.6" font-weight="bold" fill="#fafafa" text-anchor="middle">9</text>
<text transform="translate(904.50,176) scale(0.9,1)" font-family="Liberation Sans" font-size="9.6" font-weight="bold" fill="#fafafa" text-anchor="middle">10</text>
<text transform="translate(942.25,176) scale(0.9,1)" font-family="Liberation Sans" font-size="9.6" font-weight="bold" fill="#fafafa" text-anchor="middle">11</text>
<text transform="translate(980.00,176) scale(0.9,1)" font-family="Liberation Sans" font-size="9.6" font-weight="bold" fill="#fafafa" text-anchor="middle">12</text>
<text transform="translate(1017.75,176) scale(0.9,1)" font-family="Liberation Sans" font-size="9.6" font-weight="bold" fill="#fafafa" text-anchor="middle">13</text>
<text transform="translate(1055.50,176) scale(0.9,1)" font-family="Liberation Sans" font-size="9.6" font-weight="bold" fill="#fafafa" text-anchor="middle">14</text>
<text transform="translate(1093.25,176) scale(0.9,1)" font-family="Liberation Sans" font-size="9.6" font-weight="bold" fill="#fafafa" text-anchor="middle">15</text>
<text transform="translate(1131.00,176) scale(0.9,1)" font-family="Liberation Sans" font-size="9.6" font-weight="bold" fill="#fafafa" text-anchor="middle">16</text>
<text transform="translate(1168.75,176) scale(0.9,1)" font-family="Liberation Sans" font-size="9.6" font-weight="bold" fill="#fafafa" text-anchor="middle">17</text>
<text transform="translate(1206.50,176) scale(0.9,1)" font-family="Liberation Sans" font-size="9.6" font-weight="bold" fill="#fafafa" text-anchor="middle">18</text>
<text transform="translate(1244.25,176) scale(0.9,1)" font-family="Liberation Sans" font-size="9.6" font-weight="bold" fill="#fafafa" text-anchor="middle">19</text>
<path d="M523.7,164.4 H531.7 V166.6 L527.7,171.6 L523.7,166.6 Z" fill="#c2c2c2" stroke="#333" stroke-width="1"/>
<path d="M527.7,172.4 L531.7,176.6 V178.8 H523.7 V176.6 Z" fill="#c2c2c2" stroke="#333" stroke-width="1"/>
<rect x="523.7" y="179.6" width="8" height="5.6" fill="#c2c2c2" stroke="#333" stroke-width="1"/>
<path d="M1224.3,172.6 L1228.4,176.6 V179 H1220.2 V176.6 Z" fill="#c2c2c2" stroke="#333" stroke-width="1"/>
<rect x="363" y="203" width="2" height="1" fill="#d6d6d6"/>
<rect x="363" y="222" width="2" height="1" fill="#d6d6d6"/>
<rect x="362" y="232" width="5" height="1" fill="#d6d6d6"/>
<rect x="363" y="241" width="2" height="1" fill="#d6d6d6"/>
<rect x="363" y="260" width="2" height="1" fill="#d6d6d6"/>
<rect x="362" y="269" width="5" height="1" fill="#d6d6d6"/>
<rect x="363" y="279" width="2" height="1" fill="#d6d6d6"/>
<rect x="363" y="298" width="2" height="1" fill="#d6d6d6"/>
<rect x="362" y="307" width="5" height="1" fill="#d6d6d6"/>
<rect x="363" y="317" width="2" height="1" fill="#d6d6d6"/>
<rect x="363" y="335" width="2" height="1" fill="#d6d6d6"/>
<rect x="362" y="345" width="5" height="1" fill="#d6d6d6"/>
<rect x="363" y="354" width="2" height="1" fill="#d6d6d6"/>
<rect x="363" y="373" width="2" height="1" fill="#d6d6d6"/>
<rect x="362" y="383" width="5" height="1" fill="#d6d6d6"/>
<rect x="363" y="392" width="2" height="1" fill="#d6d6d6"/>
<rect x="363" y="411" width="2" height="1" fill="#d6d6d6"/>
<rect x="362" y="420" width="5" height="1" fill="#d6d6d6"/>
<rect x="363" y="430" width="2" height="1" fill="#d6d6d6"/>
<rect x="363" y="449" width="2" height="1" fill="#d6d6d6"/>
<rect x="362" y="458" width="5" height="1" fill="#d6d6d6"/>
<rect x="363" y="468" width="2" height="1" fill="#d6d6d6"/>
<rect x="363" y="486" width="2" height="1" fill="#d6d6d6"/>
<rect x="362" y="496" width="5" height="1" fill="#d6d6d6"/>
<rect x="363" y="505" width="2" height="1" fill="#d6d6d6"/>
<rect x="363" y="524" width="2" height="1" fill="#d6d6d6"/>
<rect x="362" y="534" width="5" height="1" fill="#d6d6d6"/>
<rect x="363" y="543" width="2" height="1" fill="#d6d6d6"/>
<rect x="363" y="562" width="2" height="1" fill="#d6d6d6"/>
<rect x="362" y="571" width="5" height="1" fill="#d6d6d6"/>
<rect x="363" y="581" width="2" height="1" fill="#d6d6d6"/>
<rect x="363" y="600" width="2" height="1" fill="#d6d6d6"/>
<rect x="362" y="609" width="5" height="1" fill="#d6d6d6"/>
<rect x="363" y="619" width="2" height="1" fill="#d6d6d6"/>
<text transform="translate(367,212.75) rotate(-90) scale(0.9,1)" font-family="Liberation Sans" font-size="9.6" font-weight="bold" fill="#fafafa" text-anchor="middle">1</text>
<text transform="translate(367,288.25) rotate(-90) scale(0.9,1)" font-family="Liberation Sans" font-size="9.6" font-weight="bold" fill="#fafafa" text-anchor="middle">1</text>
<text transform="translate(367,326.00) rotate(-90) scale(0.9,1)" font-family="Liberation Sans" font-size="9.6" font-weight="bold" fill="#fafafa" text-anchor="middle">2</text>
<text transform="translate(367,363.75) rotate(-90) scale(0.9,1)" font-family="Liberation Sans" font-size="9.6" font-weight="bold" fill="#fafafa" text-anchor="middle">3</text>
<text transform="translate(367,401.50) rotate(-90) scale(0.9,1)" font-family="Liberation Sans" font-size="9.6" font-weight="bold" fill="#fafafa" text-anchor="middle">4</text>
<text transform="translate(367,439.25) rotate(-90) scale(0.9,1)" font-family="Liberation Sans" font-size="9.6" font-weight="bold" fill="#fafafa" text-anchor="middle">5</text>
<text transform="translate(367,477.00) rotate(-90) scale(0.9,1)" font-family="Liberation Sans" font-size="9.6" font-weight="bold" fill="#fafafa" text-anchor="middle">6</text>
<text transform="translate(367,514.75) rotate(-90) scale(0.9,1)" font-family="Liberation Sans" font-size="9.6" font-weight="bold" fill="#fafafa" text-anchor="middle">7</text>
<text transform="translate(367,552.50) rotate(-90) scale(0.9,1)" font-family="Liberation Sans" font-size="9.6" font-weight="bold" fill="#fafafa" text-anchor="middle">8</text>
<text transform="translate(367,590.25) rotate(-90) scale(0.9,1)" font-family="Liberation Sans" font-size="9.6" font-weight="bold" fill="#fafafa" text-anchor="middle">9</text>
<text transform="translate(367,628.00) rotate(-90) scale(0.9,1)" font-family="Liberation Sans" font-size="9.6" font-weight="bold" fill="#fafafa" text-anchor="middle">10</text>
</svg>

</body></html>
